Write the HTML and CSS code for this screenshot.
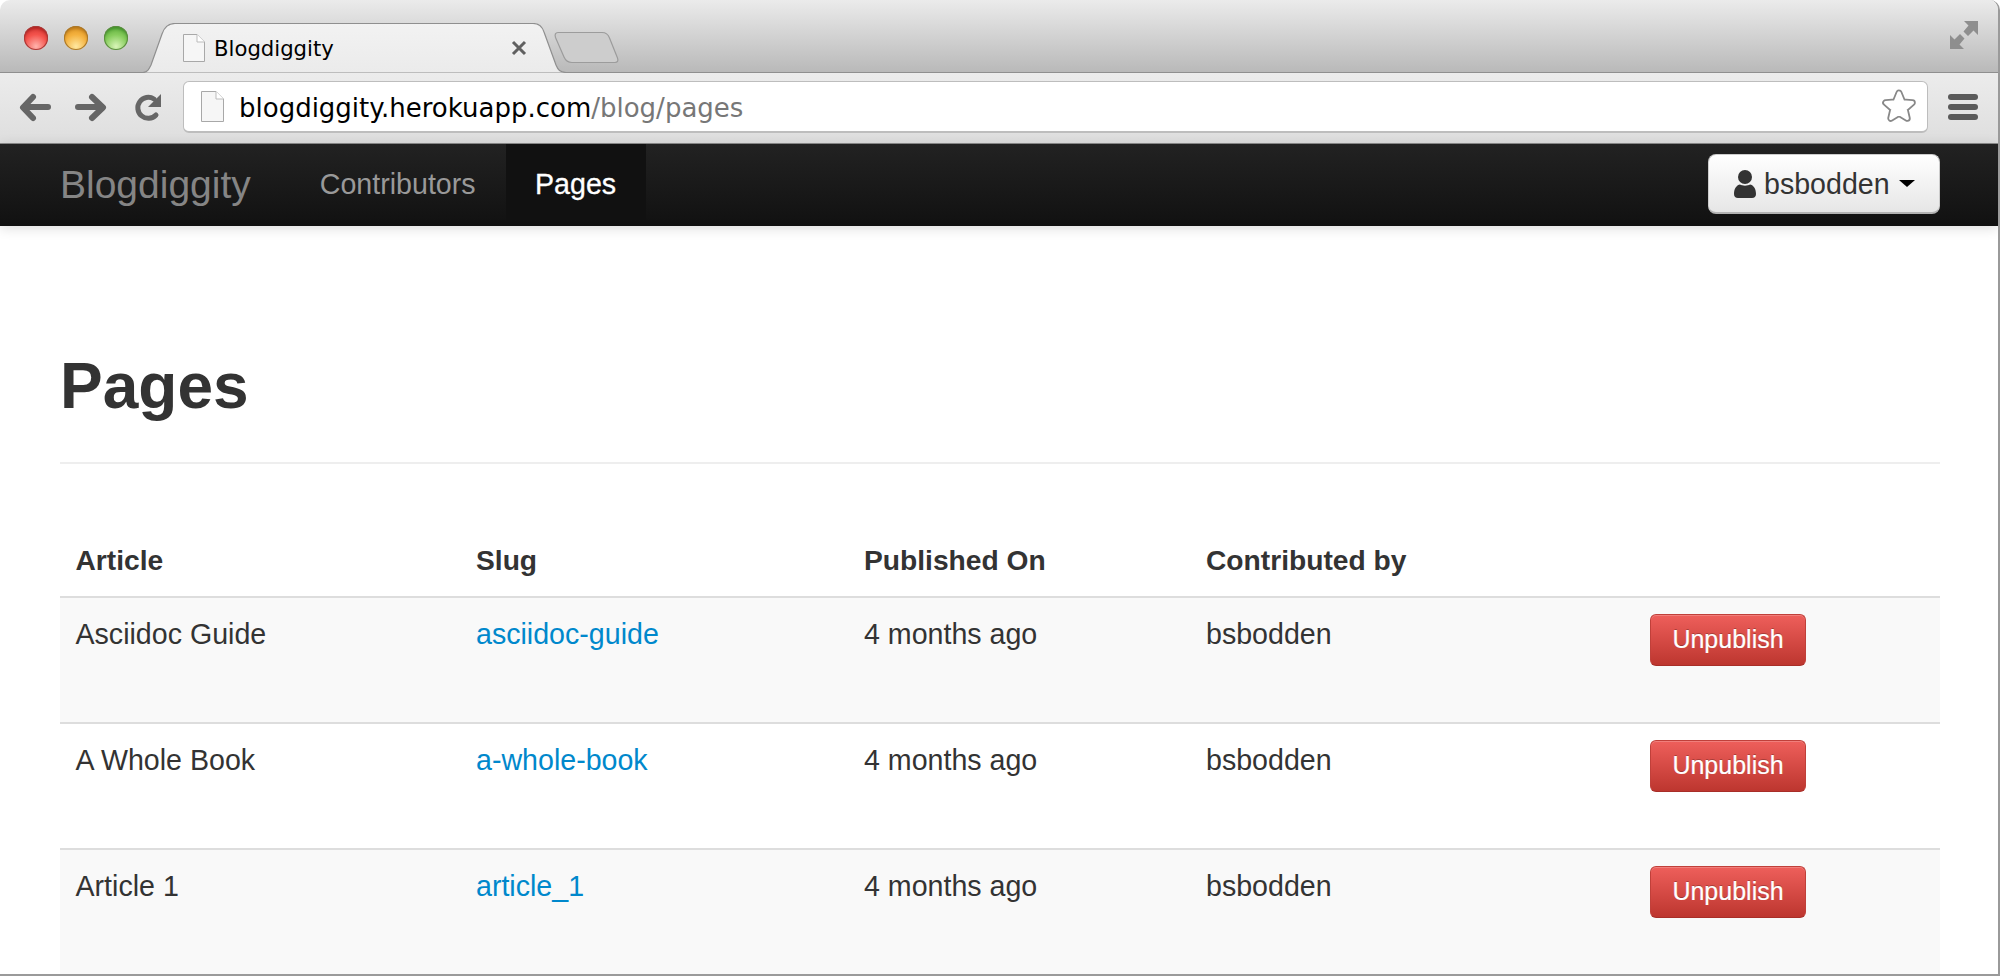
FILE: index.html
```html
<!DOCTYPE html>
<html lang="en">
<head>
<meta charset="utf-8">
<title>Blogdiggity</title>
<link rel="stylesheet" href="styles.css">
</head>
<body>
<div class="window">
  <header class="tabstrip">
    <div class="lights">
      <span class="light red"></span>
      <span class="light orange"></span>
      <span class="light green"></span>
    </div>
    <div class="tab">
      <svg class="tab-shape" width="424" height="50" viewBox="0 0 424 50">
        <defs>
          <linearGradient id="tabfill" x1="0" y1="0" x2="0" y2="1">
            <stop offset="0" stop-color="#f2f2f2"/>
            <stop offset="1" stop-color="#ebebeb"/>
          </linearGradient>
        </defs>
        <path d="M0 49.5C5 49 6 46 8 42L19 11C21 5 24 .5 32 .5L390 .5C396 .5 399 3 401 9L413 42C415 47 417 49 423 49.5" fill="url(#tabfill)" stroke="#8f8f8f" stroke-width="1.2"/>
      </svg>
      <svg class="doc tab-doc" width="22" height="28" viewBox="0 0 22 28">
        <path d="M.5.5H14L21.5 8V27.5H.5Z" fill="#f6f6f6" stroke="#a8a8a8"/>
        <path d="M14 .5V8H21.5" fill="#fff" stroke="#bbb"/>
      </svg>
      <span class="tab-title">Blogdiggity</span>
      <svg class="tab-close" width="16" height="16" viewBox="0 0 16 16">
        <path d="M2 2L14 14M14 2L2 14" stroke="#606060" stroke-width="3"/>
      </svg>
    </div>
    <svg class="newtab" width="68" height="34" viewBox="0 0 68 34">
      <path d="M6 1.5H50C54 1.5 56 3 57.500 7L65.500 27C66.500 30 65.500 31.500 63 31.500H20C16 31.500 13.500 29.500 12 26L3.500 6.500C2.500 3.500 3.500 1.500 6 1.500Z" fill="#cdcdcd" stroke="#9c9c9c" stroke-width="1.2"/>
    </svg>
    <svg class="fullscreen" width="28" height="28" viewBox="0 0 28 28">
      <path d="M14 0H28V14L23.500 9.500 18 15 13.500 10.500 18.500 4.500Z" fill="#8e8e8e"/>
      <path d="M0 28V14L4.500 18.500 10 13 14.500 17.500 9.500 23.500 14 28Z" fill="#8e8e8e"/>
    </svg>
  </header>

  <div class="toolbar">
    <svg class="tool back" width="36" height="40" viewBox="0 0 36 40">
      <path d="M6 19H30M15 9L5 19.500 15 30" fill="none" stroke="#666" stroke-width="6" stroke-linecap="round" stroke-linejoin="round"/>
    </svg>
    <svg class="tool forward" width="36" height="40" viewBox="0 0 36 40">
      <path d="M6 19H30M20 9L31 19.500 20 30" fill="none" stroke="#666" stroke-width="6" stroke-linecap="round" stroke-linejoin="round"/>
    </svg>
    <svg class="tool reload" width="36" height="40" viewBox="0 0 36 40">
      <path d="M26 27A10.500 10.500 0 1 1 24 11" fill="none" stroke="#666" stroke-width="5" stroke-linecap="round"/>
      <path d="M31 6V19H18Z" fill="#666"/>
    </svg>
    <div class="omnibox">
      <svg class="doc" width="23" height="31" viewBox="0 0 23 31">
        <path d="M.5.5H15L22.500 8V30.500H.5Z" fill="#f6f6f6" stroke="#a8a8a8"/>
        <path d="M15 .5V8H22.500" fill="#fff" stroke="#bbb"/>
      </svg>
      <span class="url"><span class="host">blogdiggity.herokuapp.com</span><span class="path">/blog/pages</span></span>
      <svg class="star" width="40" height="40" viewBox="-20 -20 40 40">
        <polygon points="0,-14 3.700,-5 13.300,-4.300 6,2 8.200,11.300 0,6.300 -8.200,11.300 -6,2 -13.300,-4.300 -3.700,-5" fill="#888" stroke="#888" stroke-width="7" stroke-linejoin="round"/>
        <polygon points="0,-14 3.700,-5 13.300,-4.300 6,2 8.200,11.300 0,6.300 -8.200,11.300 -6,2 -13.300,-4.300 -3.700,-5" fill="#fff" stroke="#fff" stroke-width="3.400" stroke-linejoin="round"/>
      </svg>
    </div>
    <svg class="menu" width="30" height="26" viewBox="0 0 30 26">
      <rect width="30" height="6" rx="3" fill="#5a5a5a"/>
      <rect y="10" width="30" height="6" rx="3" fill="#5a5a5a"/>
      <rect y="20" width="30" height="6" rx="3" fill="#5a5a5a"/>
    </svg>
  </div>

  <nav class="navbar">
    <a class="brand">Blogdiggity</a>
    <ul class="nav">
      <li class="nav-item"><a>Contributors</a></li>
      <li class="nav-item active"><a>Pages</a></li>
    </ul>
    <a class="user-btn">
      <svg class="user-icon" width="22" height="28" viewBox="0 0 22 28">
        <circle cx="11" cy="7" r="7" fill="#333"/>
        <path d="M0 24C0 18 3 15 6 14.500 8 16 14 16 16 14.500 19 15 22 18 22 24 22 26.500 20.500 28 18 28H4C1.500 28 0 26.500 0 24Z" fill="#333"/>
      </svg>
      <span class="user-name">bsbodden</span>
      <span class="caret"></span>
    </a>
  </nav>

  <main class="content">
    <div class="page-header"><h1>Pages</h1></div>
    <table class="pages">
      <colgroup>
        <col class="c-article"><col class="c-slug"><col class="c-date"><col class="c-by"><col class="c-action">
      </colgroup>
      <thead>
        <tr><th>Article</th><th>Slug</th><th>Published On</th><th>Contributed by</th><th></th></tr>
      </thead>
      <tbody>
        <tr>
          <td>Asciidoc Guide</td><td><a class="slug">asciidoc-guide</a></td><td>4 months ago</td><td>bsbodden</td>
          <td><a class="btn-danger">Unpublish</a></td>
        </tr>
        <tr>
          <td>A Whole Book</td><td><a class="slug">a-whole-book</a></td><td>4 months ago</td><td>bsbodden</td>
          <td><a class="btn-danger">Unpublish</a></td>
        </tr>
        <tr>
          <td>Article 1</td><td><a class="slug">article_1</a></td><td>4 months ago</td><td>bsbodden</td>
          <td><a class="btn-danger">Unpublish</a></td>
        </tr>
      </tbody>
    </table>
  </main>
</div>
</body>
</html>
```
FILE: styles.css
```css
* { box-sizing: border-box; }
html, body { margin: 0; height: 976px; overflow: hidden; background: #fff; }
body { font-family: "Liberation Sans", Arial, sans-serif; color: #333; }

.window {
  height: 976px;
  display: flex;
  flex-direction: column;
  overflow: hidden;
  border-right: 2px solid #9a9a9a;
  border-bottom: 2px solid #9a9a9a;
  border-top-right-radius: 10px;
  border-top-left-radius: 10px;
}

/* Browser chrome */
.tabstrip {
  flex: none;
  height: 73px;
  display: flex;
  align-items: flex-end;
  padding-left: 24px;
  background: linear-gradient(#ebebeb, #b9b9b9);
  border-bottom: 1px solid #8f8f8f;
}
.lights { display: flex; gap: 16px; align-self: flex-start; margin-top: 26px; }
.light { width: 24px; height: 24px; border-radius: 50%; display: block; }
.red { background: radial-gradient(circle at 50% 85%, #ffb3ad 0, #f4534c 50%, #c62a28 100%); box-shadow: inset 0 0 0 1px #a83a38, inset 0 3px 3px rgba(120,0,0,.4); }
.orange { background: radial-gradient(circle at 50% 85%, #ffe8a0 0, #f4b13e 50%, #d48a1a 100%); box-shadow: inset 0 0 0 1px #a9792c, inset 0 3px 3px rgba(130,70,0,.4); }
.green { background: radial-gradient(circle at 50% 85%, #d9f5b8 0, #86cc5c 50%, #4ea12f 100%); box-shadow: inset 0 0 0 1px #5c8c40, inset 0 3px 3px rgba(0,90,0,.35); }

.tab {
  position: relative;
  flex: none;
  width: 424px;
  height: 50px;
  margin-left: 15px;
  margin-bottom: -1px;
  display: flex;
  align-items: flex-start;
  padding-left: 40px;
}
.tab-shape { position: absolute; left: 0; top: 0; }
.tab-doc { position: relative; margin-top: 11px; }
.tab-title { position: relative; margin-left: 9px; margin-top: 11px; font: 21.2px/30px "DejaVu Sans", sans-serif; color: #000; }
.tab-close { position: relative; margin-left: 177px; margin-top: 17px; }

.newtab { flex: none; align-self: flex-start; margin-left: -15px; margin-top: 31px; }
.fullscreen { flex: none; align-self: flex-start; margin-left: auto; margin-top: 21px; margin-right: 20px; }

.toolbar {
  flex: none;
  height: 71px;
  display: flex;
  align-items: flex-start;
  padding: 8px 20px 0 18px;
  background: linear-gradient(#ececec, #dedede);
  border-bottom: 1px solid #8c8c8c;
}
.tool { flex: none; margin-top: 7px; }
.forward { margin-left: 18px; }
.reload { margin-left: 22px; }
.omnibox {
  flex: 1;
  height: 52px;
  margin-left: 17px;
  display: flex;
  align-items: center;
  padding: 0 8px 0 17px;
  background: #fff;
  border: 1px solid #bdbdbd;
  border-bottom: 2px solid #bdbdbd;
  border-radius: 6px;
}
.url { margin-left: 15px; padding-top: 2px; font: 26px/32px "DejaVu Sans", sans-serif; white-space: nowrap; }
.host { color: #000; }
.path { color: #777; }
.star { flex: none; margin-left: auto; }
.menu { flex: none; margin-left: 20px; margin-top: 13px; }

/* Site navbar */
.navbar {
  position: relative;
  flex: none;
  height: 82px;
  display: flex;
  align-items: center;
  padding: 0 58px 0 60px;
  background: linear-gradient(#222, #111);
  box-shadow: 0 2px 12px rgba(0,0,0,.14);
}
.brand { font-size: 39px; color: #858585; margin-right: 39px; }
.nav { display: flex; align-self: stretch; list-style: none; margin: 0; padding: 0; }
.nav-item { display: flex; align-items: center; padding: 0 30px 2px; font-size: 28.6px; color: #999; }
.nav-item.active { color: #fff; background: #111; height: 76px; width: 140px; justify-content: center; padding: 4px 0 0; -webkit-text-stroke: .3px #fff; }
.user-btn {
  align-self: flex-start;
  margin-top: 10px;
  margin-left: auto;
  width: 232px;
  height: 60px;
  display: flex;
  align-items: center;
  padding-left: 25px;
  background: linear-gradient(#fff, #e6e6e6);
  border: 1px solid #ccc;
  border-bottom: 2px solid #b3b3b3;
  border-radius: 8px;
  color: #333;
}
.user-icon { flex: none; }
.user-name { margin-left: 8px; padding-top: 1px; font-size: 28.6px; }
.caret {
  margin-left: 9px;
  width: 0;
  height: 0;
  border-left: 8px solid transparent;
  border-right: 8px solid transparent;
  border-top: 7px solid #000;
}

/* Page content */
.content { flex: 1; min-height: 0; padding: 0 58px 0 60px; background: #fff; }
.page-header { padding: 120px 0 36px; border-bottom: 2px solid #eee; }
h1 { margin: 0; font-size: 64px; line-height: 80px; font-weight: bold; color: #333; }

.pages {
  width: 1880px;
  margin-top: 60px;
  table-layout: fixed;
  border-collapse: separate;
  border-spacing: 0;
  font-size: 28.6px;
  line-height: 40px;
}
.c-article { width: 400px; }
.c-slug { width: 388px; }
.c-date { width: 342px; }
.c-by { width: 444px; }
.c-action { width: 306px; }
.pages th { padding: 16px; text-align: left; font-size: 28.2px; font-weight: bold; border-bottom: 2px solid #ddd; height: 74px; }
.pages td { padding: 16px 16px 0; height: 126px; vertical-align: top; border-bottom: 2px solid #ddd; }
.pages th:first-child, .pages td:first-child { padding-left: 15.5px; }
.pages tbody tr:nth-child(odd) td { background: #f9f9f9; }
.slug { color: #0088cc; }
.btn-danger {
  display: block;
  width: 156px;
  height: 52px;
  text-align: center;
  font-size: 25px;
  line-height: 48px;
  color: #fff;
  -webkit-text-stroke: .2px #fff;
  text-shadow: 0 -1px 0 rgba(0,0,0,.25);
  background: linear-gradient(#ee5f5b, #bd362f);
  border: 1px solid #c0403a;
  border-bottom-color: #a82e28;
  border-radius: 6px;
  box-shadow: inset 0 1px 0 rgba(255,255,255,.2);
}
```
